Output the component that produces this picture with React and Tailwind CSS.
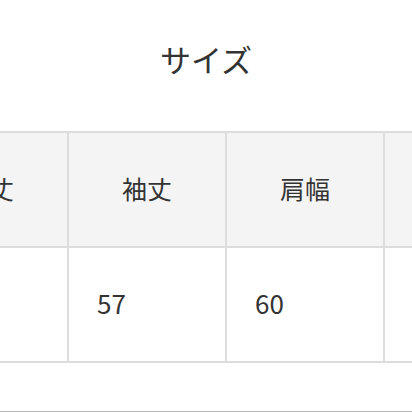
const HEADERS = ['着丈', '袖丈', '肩幅', '身幅'];
const VALUES = ['72', '57', '60', '58'];

export default function App() {
  return (
    <div
      className="w-[412px] h-[412px] overflow-hidden bg-white text-[#333333]"
      style={{ fontFamily: '"Noto Sans CJK JP", "Noto Sans", sans-serif' }}
    >
      <div className="pt-[40px] text-center text-[31px] leading-[38px]">サイズ</div>

      <div className="mt-[53px] ml-[-91px]">
        <table className="border-collapse">
          <tbody>
            <tr className="bg-[#f4f4f4]">
              {HEADERS.map((h) => (
                <td
                  key={h}
                  className="w-[158px] min-w-[158px] h-[115px] border-2 border-[#dddddd] text-center align-middle text-[25px] pb-[2px]"
                >
                  {h}
                </td>
              ))}
            </tr>
            <tr>
              {VALUES.map((v, i) => (
                <td
                  key={i}
                  className="w-[158px] min-w-[158px] h-[115px] border-2 border-[#dddddd] pl-[28px] align-middle text-[26px] pb-[4px]"
                >
                  {v}
                </td>
              ))}
            </tr>
          </tbody>
        </table>
      </div>

      <div className="mt-[48px] h-px bg-[#b5b5b5]" />
    </div>
  );
}
